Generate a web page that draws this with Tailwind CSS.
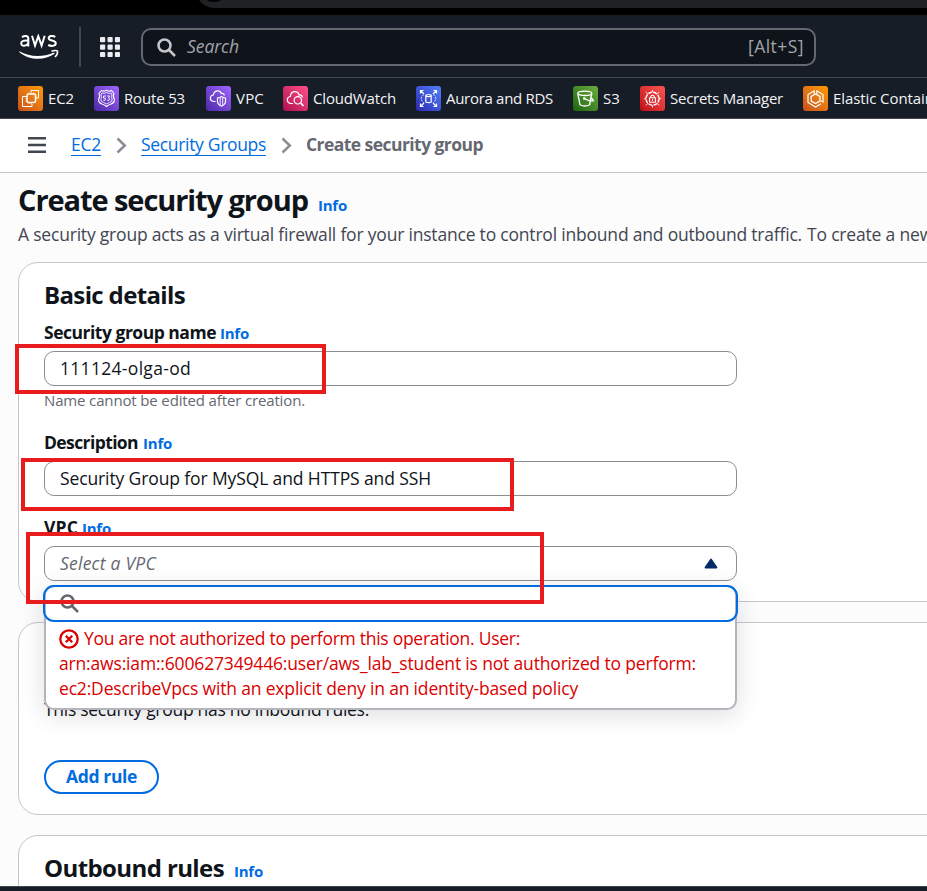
<!DOCTYPE html>
<html lang="en">
<head>
<meta charset="utf-8">
<title>Create security group | EC2</title>
<script src="https://cdn.jsdelivr.net/npm/@tailwindcss/browser@4"></script>
</head>
<body class="relative flex h-[891px] w-[927px] flex-col overflow-hidden bg-[#fcfcfd] font-['Open_Sans','Noto_Sans',sans-serif] text-[17.5px] whitespace-nowrap text-[#0f141a] [font-stretch:88%]">

<!-- browser frame edge -->
<div class="relative h-[15px] shrink-0 overflow-hidden bg-black">
  <div class="absolute -top-8 left-[195px] h-10 w-[760px] rounded-[20px] bg-[#202124]"></div>
  <div class="absolute -top-[26px] left-[200px] size-7 rounded-full bg-black"></div>
</div>

<header class="flex h-[63px] shrink-0 items-center border-t border-b border-t-[#1b1b1d] border-b-[#424650] bg-[#161d26]">
  <svg class="ml-[19px] h-[26px] w-10 shrink-0" viewBox="0 0 40 26" fill="none" stroke="#fff">
    <path stroke-width="2" d="M3 3.200C5 1.500 9.300 1.300 9.300 4.500V12.500M9.300 6.800C5 6 2.200 7 2.200 9.300C2.200 12.800 7.500 12.200 9.300 9.300M13 1.800L16 11.500L19.300 2.200L22.600 11.500L25.700 1.800M36.300 2.800C34 1.500 29.700 1.500 29.700 4.200C29.700 7.200 36.800 5.900 36.800 9.300C36.800 12.400 32 12.400 29.200 11"/>
    <path fill="#fff" stroke="none" d="M.3 17.200C10 23 23.500 23.600 34.300 18.800C35.500 18.300 36.200 19.300 35.200 20.100C25 27 10 26.500 .2 17.900Z"/>
    <path stroke-width="1.600" d="M32.500 17.300C35 16.300 38.500 16.200 38.500 17.300C38.800 18.800 37.500 21.500 36 23"/>
  </svg>
  <div class="ml-5 h-10 w-[2px] bg-[#424650]"></div>
  <svg class="ml-[19px] size-5 shrink-0" viewBox="0 0 20 20" fill="#ebebf0"><g id="dots"><rect width="5.200" height="5.200" rx="1"/><rect x="7.500" width="5.200" height="5.200" rx="1"/><rect x="14.900" width="5.100" height="5.200" rx="1"/></g><use href="#dots" y="7.500"/><use href="#dots" y="14.900"/></svg>
  <div class="ml-[21px] flex h-[38px] w-[675px] items-center rounded-[10px] border-2 border-[#656871] bg-[#0f141a] pr-[10px] pl-[14px] text-[#a4a4ad]">
    <svg class="mt-px size-[19px] shrink-0" viewBox="0 0 19 19" fill="none" stroke="#c6c6cd" stroke-width="2.500"><circle cx="7.500" cy="7.500" r="6"/><path d="M12 12L18 18"/></svg>
    <span data-w="52" class="ml-[11px] italic">Search</span>
    <span data-w="56" class="ml-auto">[Alt+S]</span>
  </div>
</header>

<nav class="flex h-[41px] shrink-0 items-center overflow-hidden border-b border-[#424650] bg-[#161d26] pl-[18px] text-[15px] font-medium text-[#f3f3f7]">
  <div class="flex w-[76px] shrink-0 items-center gap-[5px]">
    <svg class="size-[25px] shrink-0 rounded-[3px] bg-linear-to-tr from-[#c8511b] to-[#ff9900]" viewBox="0 0 25 25" fill="none" stroke="#fff"><path stroke-width="1" d="M13 6.500V4.500H20.500V12H18M9 10.500H4.500V20.500H14V18"/><rect x="9" y="8" width="8.500" height="8.500" rx="1.500" stroke-width="1.500"/><path stroke-width=".7" d="M11 6.500V8M13.200 6.500V8M15.500 6.500V8M11 16.500V18M13.200 16.500V18M7.500 12.500H9M7.500 15H9M17.500 10H19M17.500 12.500H19"/></svg>
    <span data-w="26">EC2</span>
  </div>
  <div class="flex w-[112px] shrink-0 items-center gap-[5px]">
    <svg class="size-[25px] shrink-0 rounded-[3px] bg-linear-to-tr from-[#4d27a8] to-[#a166ff]" viewBox="0 0 25 25" fill="none" stroke="#fff" stroke-width="1.100"><path d="M7.500 4.500Q10 6 12.500 4.200Q15 6 17.500 4.500L20 7.500Q18.500 10 20.300 13Q21 16.500 17 18Q14 19 12.500 20.500Q11 19 8 18Q4 16.500 4.700 13Q6.500 10 5 7.500Z"/><path stroke-width=".8" d="M8 7Q10 8 12.500 6.500Q15 8 17 7L18 8Q17 10.500 18 13Q19 15.500 15.500 16.500L12.500 18L9.500 16.500Q6 15.500 7 13Q8 10.500 7 8Z"/><path stroke-width=".9" d="M12 10H9.500V12H11Q12.300 13 11 14.300H9.300M13.300 10H15.700L14.500 12Q16.500 12.500 15 14.300H13.300"/></svg>
    <span data-w="61">Route 53</span>
  </div>
  <div class="flex w-[77px] shrink-0 items-center gap-[5px]">
    <svg class="size-[25px] shrink-0 rounded-[3px] bg-linear-to-tr from-[#4d27a8] to-[#a166ff]" viewBox="0 0 25 25" fill="none" stroke="#fff" stroke-width="1.200"><path d="M9.500 15.500H7.500Q4.300 15 4.300 12Q4.500 9.300 7.300 9Q8 4.800 11.700 4.800Q14.500 4.800 15.300 7.500Q18 7 18.300 9.500"/><path d="M11.500 12Q14 11.700 15.500 10.500Q17 11.700 19.500 12V15.500Q19.300 18.700 15.500 20.300Q11.700 18.700 11.500 15.500Z"/><path d="M14.200 12V19M16.700 12V19" stroke-width=".9"/></svg>
    <span data-w="28">VPC</span>
  </div>
  <div class="flex w-[133px] shrink-0 items-center gap-[5px]">
    <svg class="size-[25px] shrink-0 rounded-[3px] bg-linear-to-tr from-[#b0084d] to-[#ff4f8b]" viewBox="0 0 25 25" fill="none" stroke="#fff" stroke-width="1.200"><path d="M10 17.500H7.500Q4.300 16.700 4.300 13.700Q4.500 11 7.300 10.500Q7.800 5.700 12 5.700Q15.200 5.700 16 9Q19 8.700 19.500 11.500"/><circle cx="14.800" cy="14.300" r="3.700"/><path stroke-width="1.800" d="M17.700 17L20.500 20"/></svg>
    <span data-w="83">CloudWatch</span>
  </div>
  <div class="flex w-[157px] shrink-0 items-center gap-[5px]">
    <svg class="size-[25px] shrink-0 rounded-[3px] bg-linear-to-tr from-[#2e27ad] to-[#527fff]" viewBox="0 0 25 25" fill="none" stroke="#fff" stroke-width="1.200"><path d="M8 8L4.500 4.500M4.500 7.500V4.500H7.500M17 8L20.500 4.500M17.500 4.500H20.500V7.500M8 17L4.500 20.500M4.500 17.500V20.500H7.500M17 17L20.500 20.500M20.500 17.500V20.500H17.500"/><path d="M9.800 9.200Q12.500 7.800 15.200 9.200V16Q12.500 17.300 9.800 16ZM9.800 10Q12.500 11.200 15.200 10"/><path stroke-width="1" stroke-dasharray="1.800 1" d="M7.500 8.800Q3 12.500 7.500 16.500M17.500 8.800Q22 12.500 17.500 16.500"/></svg>
    <span data-w="107">Aurora and RDS</span>
  </div>
  <div class="flex w-[67px] shrink-0 items-center gap-[5px]">
    <svg class="size-[25px] shrink-0 rounded-[3px] bg-linear-to-tr from-[#1b660f] to-[#6cae3e]" viewBox="0 0 25 25" fill="none" stroke="#fff" stroke-width="1.300"><ellipse cx="11.800" cy="7.300" rx="7" ry="2.200"/><path d="M4.800 7.500L7 18.700Q11.800 21.300 16.600 18.700L18.800 7.500"/><path d="M11.500 12.500Q16 15.500 20.500 14.800Q20 12.700 17.500 12"/><circle cx="11.300" cy="12.500" r=".7" fill="#fff"/></svg>
    <span data-w="17">S3</span>
  </div>
  <div class="flex w-[163px] shrink-0 items-center gap-[5px]">
    <svg class="size-[25px] shrink-0 rounded-[3px] bg-linear-to-tr from-[#bd0816] to-[#ff5252]" viewBox="0 0 25 25" fill="none" stroke="#fff" stroke-width="1.100"><circle cx="12.500" cy="12.700" r="6.500" stroke-width="1.400" stroke-dasharray="4 1.100"/><path stroke-width=".9" d="M12.500 4V6M12.500 19.500V21.500M4 12.700H6M19 12.700H21M5.800 6L8 8.200M19.200 6L17 8.200M5.800 19.400L8 17.200M19.200 19.400L17 17.200"/><rect x="9.500" y="11.800" width="6" height="4.500" rx=".5"/><path d="M10.700 11.800V10.500Q12.500 8 14.300 10.500V11.800M12.500 13.300V15"/></svg>
    <span data-w="113">Secrets Manager</span>
  </div>
  <div class="flex shrink-0 items-center gap-[5px]">
    <svg class="size-[25px] shrink-0 rounded-[3px] bg-linear-to-tr from-[#c8511b] to-[#ff9900]" viewBox="0 0 25 25" fill="none" stroke="#fff" stroke-width="1.200"><path d="M11 5L5 8.500V16.500L12.500 21L18 17.800M14 5L20 8.500V16L18 15"/><path d="M12.500 8L17 10.500V15L12.500 17.500L8.200 15V10.500Z" stroke-width="1.400"/><path d="M11.200 4.200V8M13.800 4.200V8"/></svg>
    <span data-w="168">Elastic Container Service</span>
  </div>
</nav>

<div class="flex h-[54px] shrink-0 items-center border-b border-[#c6c6cd] bg-white pl-7">
  <svg class="-mt-px h-4 w-[18px]" viewBox="0 0 18 16" fill="#424650"><path d="M0 0H18V2.400H0ZM0 6.800H18V9.200H0ZM0 13.600H18V16H0Z"/></svg>
  <a class="-mt-px ml-[25px] border-b border-[#006ce0] leading-[21px] text-[#006ce0]"><span data-w="30">EC2</span></a>
  <svg class="-mt-px ml-[15px] h-[17px] w-[11px]" viewBox="0 0 11 17" fill="none" stroke="#8c8c94" stroke-width="2.500"><path d="M1.500 1.500L8.800 8.500L1.500 15.500"/></svg>
  <a class="-mt-px ml-[14px] border-b border-[#006ce0] leading-[21px] text-[#006ce0]"><span data-w="125">Security Groups</span></a>
  <svg class="-mt-px ml-[15px] h-[17px] w-[11px]" viewBox="0 0 11 17" fill="none" stroke="#8c8c94" stroke-width="2.500"><path d="M1.500 1.500L8.800 8.500L1.500 15.500"/></svg>
  <span data-w="177" class="-mt-[2px] ml-[14px] font-bold text-[#656871]">Create security group</span>
</div>

<main class="flex min-h-0 flex-1 flex-col overflow-hidden pl-[18px]">
  <div class="mt-[7px] mb-[2px] flex h-10 shrink-0 items-baseline gap-[10px] leading-10">
    <h1 data-w="290" class="text-[29px] font-bold">Create security group</h1>
    <span data-w="29" class="text-[15px] font-bold text-[#006ce0]">Info</span>
  </div>
  <p class="h-10 shrink-0 leading-[25px] text-[#424650]"><span data-w="784">A security group acts as a virtual firewall for your instance to control inbound and outbound traffic.</span><span data-w="126" class="ml-[5px]">To create a new</span> security group, complete the fields below.</p>

  <section class="h-[340px] w-[1200px] shrink-0 rounded-[20px] border border-[#c6c6cd] bg-white px-[25px] pt-4">
    <h2 data-w="141" class="w-max text-[24px] leading-8 font-bold">Basic details</h2>
    <div class="mt-[9px] flex h-[25px] items-baseline gap-1 leading-[25px] font-bold"><span data-w="172">Security group name</span><span data-w="29" class="text-[15px] text-[#006ce0]">Info</span></div>
    <div class="mt-[6px] flex h-[35px] w-[693px] items-center rounded-[10px] border border-[#8c8c94] px-[15px] pb-px"><span data-w="131">111124-olga-od</span></div>
    <div class="mt-1 h-[21px] text-[15px] leading-5 text-[#656871]"><span data-w="261">Name cannot be edited after creation.</span></div>
    <div class="mt-[19px] flex h-[25px] items-baseline gap-[5px] leading-[25px] font-bold"><span data-w="94">Description</span><span data-w="29" class="text-[15px] text-[#006ce0]">Info</span></div>
    <div class="mt-[6px] flex h-[35px] w-[693px] items-center rounded-[10px] border border-[#8c8c94] px-[15px] pb-px"><span data-w="371">Security Group for MySQL and HTTPS and SSH</span></div>
    <div class="mt-[19px] flex h-[25px] items-baseline gap-1 leading-[25px] font-bold"><span data-w="34">VPC</span><span data-w="29" class="text-[15px] text-[#006ce0]">Info</span></div>
    <div class="relative mt-[6px] flex h-[35px] w-[693px] items-center justify-between rounded-[10px] border border-[#8c8c94] pr-[18px] pb-px pl-[15px]">
      <span data-w="96" class="text-[#656871] italic">Select a VPC</span>
      <svg class="h-[11px] w-[14px]" viewBox="0 0 14 11"><path d="M7 1.500L12.500 9.500H1.500Z" fill="#002b66" stroke="#002b66" stroke-width="1.800" stroke-linejoin="round"/></svg>
      <!-- VPC options dropdown -->
      <div class="absolute top-[38px] -left-px z-10 h-[125px] w-[693px] rounded-[10px] border-2 border-[#b4b4bb] bg-white shadow-[0_5px_25px_1px_rgba(0,7,22,0.12)]">
        <div class="-mt-[2px] -ml-[3px] flex h-[37px] w-[695px] items-center rounded-[11px] border-[2.5px] border-[#006ce0] pl-[15px]">
          <svg class="size-[19px]" viewBox="0 0 19 19" fill="none" stroke="#656871" stroke-width="2.500"><circle cx="7.500" cy="7.500" r="6"/><path d="M12 12L18 18"/></svg>
        </div>
        <div class="pt-1 pl-[13px] leading-[25px] text-[#db0000]">
          <div class="flex items-center gap-[5px]">
            <svg class="size-5" viewBox="0 0 20 20" fill="none" stroke="#db0000" stroke-width="2.300"><circle cx="10" cy="10" r="8.700"/><path d="M6.800 6.800L13.200 13.200M13.200 6.800L6.800 13.200"/></svg>
            <span data-w="436">You are not authorized to perform this operation. User:</span>
          </div>
          <div><span data-w="637">arn:aws:iam::600627349446:user/aws_lab_student is not authorized to perform:</span></div>
          <div><span data-w="519">ec2:DescribeVpcs with an explicit deny in an identity-based policy</span></div>
        </div>
      </div>
    </div>
  </section>

  <section class="mt-5 h-[193px] w-[1200px] shrink-0 rounded-[20px] border border-[#c6c6cd] bg-white px-[25px] pt-4">
    <h2 class="text-[24px] leading-8 font-bold">Inbound rules</h2>
    <p class="mt-[26px] leading-[25px]"><span data-w="325">This security group has no inbound rules.</span></p>
    <button class="mt-[38px] flex h-[34px] w-[115px] items-center justify-center rounded-full border-2 border-[#006ce0] pb-px font-bold text-[#006ce0]"><span data-w="71">Add rule</span></button>
  </section>

  <section class="mt-5 h-[193px] w-[1200px] shrink-0 rounded-[20px] border border-[#c6c6cd] bg-white px-[25px] pt-4">
    <div class="flex items-baseline gap-[10px] leading-8"><h2 data-w="180" class="text-[24px] font-bold">Outbound rules</h2><span data-w="29" class="text-[15px] font-bold text-[#006ce0]">Info</span></div>
  </section>
</main>

<footer class="h-[5px] shrink-0 border-t border-[#424650] bg-[#161d26]"></footer>

<!-- annotation boxes -->
<div class="absolute top-[344px] left-[15px] z-20 h-[50px] w-[311px] border-4 border-[#e81c1c]"></div>
<div class="absolute top-[458px] left-[21px] z-20 h-[53px] w-[493px] border-4 border-[#e81c1c]"></div>
<div class="absolute top-[532px] left-[26px] z-20 h-[72px] w-[518px] border-4 border-[#e81c1c]"></div>

<script>
  // Track each label so that it fills its nominal advance width.
  function fitLabels() {
    for (const el of document.querySelectorAll('[data-w]')) {
      el.style.letterSpacing = '0px';
      const range = document.createRange();
      range.selectNodeContents(el);
      const natural = range.getBoundingClientRect().width;
      el.style.letterSpacing = (el.dataset.w - natural) / el.textContent.length + 'px';
    }
  }
  window.addEventListener('load', () => { fitLabels(); requestAnimationFrame(fitLabels); });
</script>
</body>
</html>
